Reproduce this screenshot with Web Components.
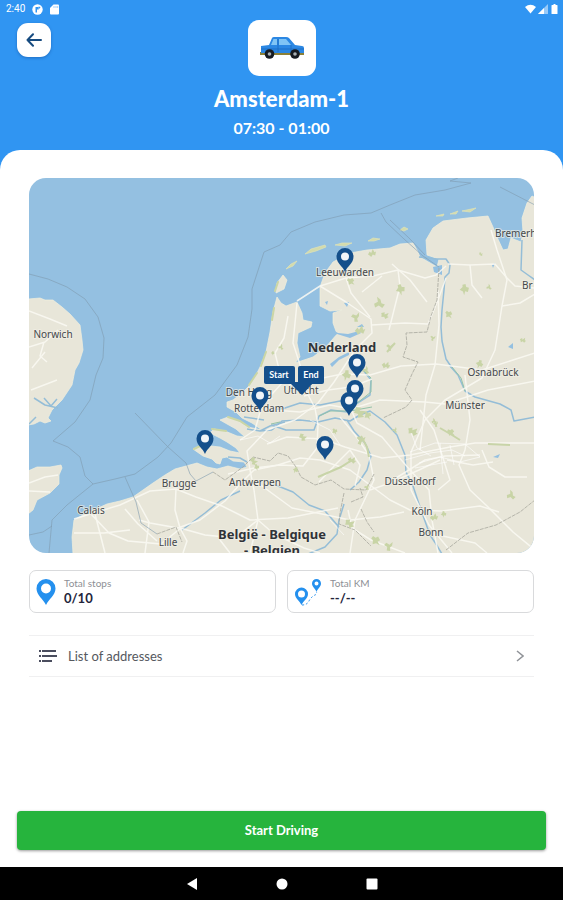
<!DOCTYPE html>
<html lang="en">
<head>
<meta charset="utf-8">
<meta name="viewport" content="width=device-width, initial-scale=1">
<title>Amsterdam-1</title>
<style>
  body {
    background-color: #3095f2;
    color: #2c2f3e;
    display: flex;
    flex-direction: column;
    font-family: Lato, "Liberation Sans", sans-serif;
    margin: 0;
    min-height: 100vh;
  }
</style>
</head>
<body>
<status-bar>2:40</status-bar>
<route-header>
  <span slot="name">Amsterdam-1</span>
  <span slot="time">07:30 - 01:00</span>
</route-header>
<route-sheet>
  <route-map></route-map>
  <stat-row>
    <stat-card icon="stops"><span slot="label">Total stops</span>0/10</stat-card>
    <stat-card icon="km"><span slot="label">Total KM</span>--/--</stat-card>
  </stat-row>
  <address-link>List of addresses</address-link>
  <drive-button slot="footer">Start Driving</drive-button>
</route-sheet>
<nav-bar></nav-bar>

<script>
// Attach an open shadow root with the given markup
function define (tagName, html, setup) {
  const template = document.createElement('template')
  template.innerHTML = html

  customElements.define(tagName, class extends HTMLElement {
    constructor () {
      super()
      this.attachShadow({ mode: 'open' }).appendChild(template.content.cloneNode(true))
    }

    connectedCallback () {
      if (setup) {
        setup(this, this.shadowRoot)
      }
    }
  })
}

define('status-bar', `
<style>
  :host {
    align-items: center;
    color: #fff;
    display: flex;
    font: 10px/18px Roboto, sans-serif;
    gap: 7px;
    height: 18px;
    padding: 0 4px 0 6px;
  }
  .right {
    display: flex;
    gap: 2px;
    margin-left: auto;
  }
  svg {
    display: block;
    fill: #fff;
  }
</style>
<slot></slot>
<svg width="11" height="11" viewBox="0 0 11 11"><circle cx="5.500" cy="5.500" r="5.200"/><path d="M3.500 8.500V3h3.200v2.500H5v3z" fill="#3095f2"/><path d="M6.500 2.500 8.500 3 7.500 5z" fill="#3095f2"/></svg>
<svg width="9" height="11" viewBox="0 0 9 11"><path d="M3.500 .500H8q1 0 1 1v8q0 1-1 1H1q-1 0-1-1V4z"/><path d="M4 2v2M6 2v2M7.700 2v2" stroke="#7dbbf7" stroke-width=".7"/></svg>
<div class="right">
  <svg width="11" height="10" viewBox="0 0 11 10"><path d="M0 3Q5.500-1.500 11 3L5.500 9.500z"/></svg>
  <svg width="10" height="10" viewBox="0 0 10 10"><path d="M0 10 10 0v10z" opacity=".5"/><path d="M0 10 6 4v6z"/></svg>
  <svg width="9" height="10" viewBox="0 0 9 10"><path d="M3.500 0h2v1H7q.5 0 .5.500v8q0 .5-.5.500H2q-.5 0-.5-.500v-8Q1.500 1 2 1h1.500z"/></svg>
</div>
`)

define('route-header', `
<style>
  :host {
    color: #fff;
    display: block;
    padding: 2px 17px 12px;
    text-align: center;
  }
  .top {
    align-items: start;
    display: grid;
    grid-template-columns: 1fr 68px 1fr;
  }
  button {
    background-color: #fff;
    border: none;
    border-radius: 11px;
    box-shadow: 0 1px 3px rgba(0, 40, 110, .35);
    cursor: pointer;
    display: grid;
    height: 34px;
    margin-top: 3px;
    padding: 0;
    place-items: center;
    width: 34px;
  }
  .vehicle {
    background-color: #fff;
    border-radius: 11px;
    display: grid;
    height: 56px;
    place-items: center;
  }
  h1 {
    font-size: 22px;
    font-weight: 900;
    line-height: 30px;
    margin: 8px 0 4px;
  }
  p {
    font-size: 16px;
    font-weight: 700;
    line-height: 20px;
    margin: 0;
  }
</style>
<div class="top">
  <button type="button" aria-label="Back">
    <svg width="16" height="14" viewBox="0 0 16 14" fill="none" stroke="#164b80" stroke-width="2" stroke-linecap="round" stroke-linejoin="round"><path d="M15 7H1.500M7 1.300 1.500 7 7 12.700"/></svg>
  </button>
  <div class="vehicle">
    <svg width="46" height="24" viewBox="0 0 46 24">
      <path d="M1 16h44v3H1z" fill="#8b8038"/>
      <path d="M2 10 10 9 13 2Q13.500 1 15 1h12q2 0 3 1l6 7 7 1q2 0 2 2v5H2z" fill="#2b87e3"/>
      <path d="M12 9 14.500 3H18v6zM20 3h7l5 6H20z" fill="#80c4f5"/>
      <path d="M19 3v13M32 9v7M2 13h43" stroke="#1b6bc0" stroke-width=".8"/>
      <circle cx="10.500" cy="18" r="4.800" fill="#161b22"/><circle cx="10.500" cy="18" r="1.800" fill="#a9b0b5"/>
      <circle cx="36" cy="18" r="4.800" fill="#161b22"/><circle cx="36" cy="18" r="1.800" fill="#a9b0b5"/>
    </svg>
  </div>
</div>
<h1><slot name="name"></slot></h1>
<p><slot name="time"></slot></p>
`)

define('route-sheet', `
<style>
  :host {
    background-color: #fff;
    border-radius: 20px 20px 0 0;
    display: flex;
    flex: 1;
    flex-direction: column;
    justify-content: space-between;
    padding: 28px 17px 17px;
  }
  .content {
    margin: 0 12px 24px;
  }
</style>
<div class="content"><slot></slot></div>
<slot name="footer"></slot>
`)

const pins = [[345, 272], [357, 378], [355, 404], [349, 416], [325, 460], [205, 454], [260, 411]]

// x, baseline, text, optional class
const places = [
  [53, 338, 'Norwich'], [345, 276, 'Leeuwarden'], [342, 352, 'Nederland', 'country'],
  [493, 376, 'Osnabrück'], [465, 409, 'Münster'], [249, 396, 'Den Haag'],
  [259, 412, 'Rotterdam'], [301, 394, 'Utrecht'], [179, 487, 'Brugge'],
  [255, 486, 'Antwerpen'], [91, 514, 'Calais'], [168, 546, 'Lille'],
  [410, 485, 'Düsseldorf'], [422, 515, 'Köln'], [431, 536, 'Bonn'],
  [495, 237, 'Bremerh', 'edge'], [522, 289, 'Br', 'edge'],
  [272, 539, 'België - Belgique', 'country'], [272, 555, '- Belgien', 'country']
]

// Woods and heath, drawn as small blobs
const woods = [
  [372, 253, 4], [401, 289, 5], [379, 303, 6], [385, 315, 4], [351, 281, 4], [356, 317, 5],
  [360, 330, 5], [465, 289, 5], [489, 287, 3], [481, 254, 2], [449, 314, 4], [390, 347, 4],
  [386, 365, 4], [347, 375, 5], [366, 370, 4], [303, 437, 4], [335, 431, 3], [361, 440, 5],
  [352, 460, 4], [296, 470, 3], [367, 487, 3], [254, 461, 4], [257, 467, 3], [434, 421, 3],
  [413, 431, 5], [451, 432, 4], [436, 424, 3], [434, 517, 4], [444, 514, 3], [511, 495, 5],
  [350, 523, 5], [376, 540, 5], [389, 546, 5], [537, 546, 5], [273, 353, 2], [281, 347, 3],
  [360, 412, 6], [368, 415, 4], [433, 338, 3], [523, 340, 3], [480, 364, 4], [395, 430, 3]
]

const woodShapes = [
  'M-5 2-3-2-1 0 1-5 3-1 5-2 4 3 1 2-1 5-3 3z',
  'M-4-3-1-2 1-4 4-1 2 1 5 4 1 3-2 5-3 1-5 0z',
  'M-2-5 1-3 2 0 5 1 3 4 0 2-3 4-4 1-1-1z'
]

function drawWood ([x, y, r], i) {
  return `<path transform="translate(${x} ${y}) rotate(${i * 47 % 90}) scale(${r / 5})" d="${woodShapes[i % 3]}"/>`
}

function drawPin ([x, y]) {
  return `<path transform="translate(${x} ${y})" d="M0 0C-2-6-8.500-8-8.500-15.500a8.500 8.500 0 0 1 17 0C8.500-8 2-6 0 0z"/><circle cx="${x}" cy="${y - 15.5}" r="4" fill="#f2f5f8"/>`
}

define('route-map', `
<style>
  :host {
    border-radius: 17px;
    display: block;
    overflow: hidden;
  }
  svg {
    display: block;
    height: auto;
    width: 100%;
  }
  .places text {
    fill: #44484c;
    font: 10px "Noto Sans", sans-serif;
    paint-order: stroke;
    stroke: #f1efe6;
    stroke-opacity: .7;
    stroke-width: 2px;
    text-anchor: middle;
  }
  .places .country {
    fill: #303338;
    font-size: 13px;
    font-weight: 700;
  }
  .places .edge {
    text-anchor: start;
  }
  .tags text {
    fill: #fff;
    font: 700 9px Lato, sans-serif;
    text-anchor: middle;
  }
</style>
<svg viewBox="29 178 505 375" role="img" aria-label="Map of the route">
  <path fill="#94c0e1" d="M29 178h506v375H29z"/>

  <g fill="#e8e6d9" stroke="#f2efdd" stroke-width=".7">
    <path d="M28 299 40 298 45 300 53 300 62 307 70 314 80 325 82 340 83 350 79 363 75 370 72 385 62 400 52 410 50 414 48 418 51 421 45 423 40 421 34 424 28 425z"/>
    <path d="M28 471 37 467 50 467 61 465 62 468 59 475 59 484 50 493 37 500 33 510 28 514z"/>
    <path d="M73 554 72 537 74 520 83 515 96 509 107 504 120 501 133 497 143 490 153 483 165 475 175 469 186 466 197 463 207 467 217 469 228 466 240 469 247 467 244 462 233 461 227 457 222 458 220 464 216 463 212 459 203 456 193 449 202 445 211 446 220 447 230 451 240 453 236 448 227 442 220 438 210 433 214 429 225 431 237 436 245 437 236 429 227 424 220 420 228 417 238 421 248 427 262 430 252 423 242 418 236 412 227 407 227 402 233 400 242 393 250 385 256 375 261 365 266 352 270 332 273 312 277 297 281 303 286 306 297 302 302 313 303 320 312 322 311 327 298 333 297 343 300 357 295 363 313 357 326 347 337 334 333 323 333 313 342 310 330 311 320 306 320 287 325 273 333 262 350 253 367 250 390 248 400 244 413 243 417 250 420 257 437 267 439 259 427 255 426 240 433 228 443 221 467 218 488 216 493 227 497 237 503 250 508 249 511 238 521 242 523 232 522 218 527 203 532 196 536 198V554z"/>
    <path d="M276 293 277 283 283 275 287 280 284 289z"/>
  </g>

  <g fill="#d3dbac" stroke="#dfe2b8" stroke-width=".7">
    <path d="M286 269 291 264 297 261 293 266zM305 254 311 249 325 245 326 247 316 251zM335 245 342 243 352 243 345 246zM368 241 373 238 380 239 374 241zM400 230 404 227 408 229 404 231zM436 216 444 214 443 216zM450 214 458 211 456 214zM462 211 476 208 470 212z"/>
  </g>
  <g fill="none" stroke="#cbd6a5" stroke-width="2" stroke-linecap="round">
    <path d="M275 291 278 282M272 320 274 308M261 366 266 352M249 385 257 373M228 417 240 421 249 427M212 429 226 431M194 449 202 445"/>
  </g>

  <g fill="#94c0e1">
    <path d="M303 333 313 335 325 343 337 334 350 338 361 333 359 331 348 334 338 333 331 329 329 319 318 321 313 327z"/>
    <path d="M330 364 339 357 349 352 349 355 339 360 332 367zM344 303 349 302 347 307zM325 302 328 301 327 305zM357 327 362 324 364 327zM492 265 495 263 493 268zM493 457 500 454 498 458zM508 347 513 343 513 349zM433 267 442 265 442 275 434 272z"/>
  </g>

  <g fill="none" stroke="#94bdd7" stroke-width="1.500" stroke-linejoin="round">
    <path d="M419 257 436 259 446 259 450 265 449 273 445 277 444 290 442 310 441 327 442 341 446 359 452 368"/>
    <path d="M522 240 521 270 528 275 535 280"/>
    <path d="M450 366 458 375 465 391 475 397 500 404 511 410 514 421 535 417"/>
    <path d="M272 430 282 421 300 420 318 422 335 418 350 421 360 415 370 411 385 422 397 435 405 455 406 472 413 486 421 510 430 535 436 544 442 554"/>
    <path d="M270 411 285 408 300 403 320 405 340 401 356 404 370 395 371 380 363 370"/>
    <path d="M271 425 286 430 314 430 319 416 331 410 347 412"/>
    <path d="M228 457 240 458 247 462M247 429 260 431 272 430M244 417 264 420M260 431 270 426 285 422"/>
    <path d="M347 420 354 431 365 443 371 456 367 470 359 482 350 490"/>
    <path d="M344 504 339 520 337 534 325 547 308 554"/>
    <path d="M273 484 293 492 309 505 325 511 339 527M240 491 221 500 205 513 182 530"/>
    <path d="M34 398 45 405 58 408M44 398 51 406 57 399M29 424 36 417"/>
  </g>

  <g fill="none" stroke="#94c3a8" stroke-width="1">
    <path d="M452 367 461 378 465 391M363 370 371 378 371 392 361 400 350 408M319 416 330 411 350 411 372 407M271 424 280 422"/>
  </g>

  <g fill="none" stroke="#fbfaf4" stroke-width="1.500" stroke-linejoin="round" opacity=".85">
    <path d="M297 301 320 286 346 302 371 319 372 333 355 350 334 382 318 403 295 420 267 430 247 451 250 470 254 490 258 520 250 553"/>
    <path d="M320 286 346 278 373 276 398 270 425 278 436 275 446 266"/>
    <path d="M448 264 470 265 495 264 507 278 515 286 535 288"/>
    <path d="M346 278 351 293 370 317M362 292 382 276M398 270 400 286 389 330M392 264 410 280 427 302M372 325 405 323 428 324 438 300 446 278"/>
    <path d="M491 230 497 250 507 280 502 306 495 350 482 378 445 400 425 420 411 452 411 490 429 525 452 553"/>
    <path d="M502 306 520 303 535 294M470 265 472 285 482 298M438 290 439 325 435 365 426 395 420 450"/>
    <path d="M288 316 284 338 275 353 278 365 283 382 262 405 255 430 240 440M297 303 293 343 303 374 306 391 315 408 318 425 317 448 303 466 280 465 254 468 228 474"/>
    <path d="M283 382 302 387 318 379 342 374 370 375 401 366 436 364 482 370 535 353M304 396 328 390 351 387 372 379"/>
    <path d="M273 410 300 412 330 405 351 409 380 400 425 402 445 404 488 390 535 381M267 444 287 437 322 439 345 447 382 458 410 455 450 447 475 443 535 443"/>
    <path d="M350 407 357 423 382 437 397 455 410 470 429 490 432 520 438 553M340 417 355 435 369 455 374 480 355 520 350 553"/>
    <path d="M254 470 278 465 300 458 320 460 350 470 390 500 410 510 442 511 480 506 499 512"/>
    <path d="M420 410 434 430 442 455 450 480 438 490M465 375 470 420 465 450 459 465 470 490 487 506 513 532 535 550"/>
    <path d="M482 450 489 467 505 477 527 477M447 460 473 465 493 462M370 490 390 483 419 470 440 460M396 478 425 460 445 456 480 455"/>
    <path d="M254 470 241 483 225 501 200 520 178 528 150 523 139 520M254 480 292 508 322 514 350 520 380 517 404 512M258 520 274 534 304 548 320 553"/>
    <path d="M74 519 90 514 120 505 150 491 176 489 196 497 222 506 250 520 288 518 338 508M176 489 175 510 180 528 187 541 183 553M180 528 205 535 235 538 258 520"/>
    <path d="M91 514 109 533 128 541 161 544 181 528M125 509 138 524 157 541M74 533 104 533 130 530M95 514 105 553M137 500 149 522 145 553M220 540 230 553"/>
    <path d="M29 347 45 342 58 330M44 342 40 356 47 362M32 368 45 352M29 483 45 477 58 475M29 491 50 492M31 390 57 380M29 311 50 319 67 326"/>
    <path d="M348 510 352 528 371 540 405 553M438 535 475 543 487 553M355 486 360 465 350 450 335 465 319 482"/>
  </g>

  <g fill="none" stroke="#fff" stroke-width="1" opacity=".6">
    <path d="M410 452 435 443 465 444 480 457 460 462 440 457 419 463M405 460 430 453 452 450 465 456M415 468 447 462M440 443 443 474M450 445 454 465M410 430 417 448 431 456M344 535 330 520M240 440 258 436 270 443 280 436M258 405 273 398M310 420 330 430 340 445"/>
  </g>

  <g fill="none" stroke="#7f9bae" stroke-width=".8" opacity=".75">
    <path d="M29 274 48 279 67 287 85 299 98 317 104 338 103 358 96 375 90 400 75 422 53 441 68 447 80 457 85 476 93 484 115 479 135 474 158 457 171 443 187 417 215 395 237 365 248 337 252 309 252 289 264 252 280 245 291 232 315 222 344 215 371 213 390 205 415 195 445 190 471 183"/>
    <path d="M93 484 67 505 52 520 49 553M29 535 43 532 52 526M135 413 168 447 186 463 190 474 196 481 213 472M125 477 136 502 141 523 157 534"/>
    <path d="M381 213 386 222 404 239 423 256 439 267M390 220 410 239 425 255M471 183 450 181 458 178M500 187 535 205"/>
  </g>
  <g fill="none" stroke="#a9a99f" stroke-width="1" stroke-dasharray="4 1" opacity=".8">
    <path d="M439 268 437 300 431 316 427 332 406 333 407 345 403 357 418 362 412 374 405 390 412 400 406 407 383 418"/>
    <path d="M213 472 225 480 243 467 253 457 270 461 278 453 288 456 296 467 301 477 315 485 331 480 344 489 366 490 374 474"/>
    <path d="M344 493 340 513 339 524 355 530 371 546M351 502 363 497 360 488M361 509 367 522 374 532M157 534 176 527 182 542M446 550 468 533 496 525 520 512 535 500"/>
  </g>

  <g id="woods" fill="#c8d4a6"></g>
  <g fill="none" stroke="#c8d4a8" stroke-width="2"><path d="M361 436 367 447 369 457M440 428 452 435 460 440M488 444 510 445M318 477 341 467 352 460M387 352 395 343"/></g>

  <g id="places" class="places"></g>
  <g fill="#144f8b">
    <g id="pins"></g>
    <path d="M289 382h25l-12 13z"/>
    <rect x="264" y="366" width="31" height="18" rx="2"/>
    <rect x="298" y="366" width="26" height="18" rx="2"/>
  </g>
  <g class="tags">
    <text x="279" y="378">Start</text>
    <text x="311" y="378">End</text>
  </g>
</svg>
`, (host, root) => {
  root.getElementById('woods').innerHTML = woods.map(drawWood).join('')
  root.getElementById('pins').innerHTML = pins.map(drawPin).join('')
  root.getElementById('places').innerHTML = places.map(([x, y, name, type]) => {
    return `<text x="${x}" y="${y}" class="${type || 'town'}">${name}</text>`
  }).join('')
})

define('stat-row', `
<style>
  :host {
    display: grid;
    gap: 11px;
    grid-template-columns: 1fr 1fr;
    margin: 17px 0 22px;
  }
</style>
<slot></slot>
`)

const statIcons = {
  stops: `<svg width="20" height="26" viewBox="0 0 20 26" fill="#2490ee"><path fill-rule="evenodd" d="M10 26C7 20 .5 16 .5 9.500a9.500 9.500 0 0 1 19 0C19.500 16 13 20 10 26zM10 4.500a5 5 0 1 0 0 10 5 5 0 0 0 0-10z"/></svg>`,
  km: `<svg width="28" height="28" viewBox="0 0 28 28" fill="#2490ee"><path fill-rule="evenodd" d="M7.500 27C5.500 22.500 1 20.500 1 16a6.500 6.500 0 0 1 13 0C14 20.500 9.500 22.500 7.500 27zM7.500 12.500a3.500 3.500 0 1 0 0 7 3.500 3.500 0 0 0 0-7z"/><path fill-rule="evenodd" d="M22.500 14C21.500 10.500 18 9 18 5.500a4.500 4.500 0 0 1 9 0C27 9 23.500 10.500 22.500 14zM22.500 3.500a2 2 0 1 0 0 4 2 2 0 0 0 0-4z"/><path d="M8 27q5 0 7-4t6-6q2-1 1.500-3" fill="none" stroke="#2490ee" stroke-dasharray="2 2"/></svg>`
}

define('stat-card', `
<style>
  :host {
    align-items: center;
    border: 1px solid #d9dadc;
    border-radius: 7px;
    box-sizing: border-box;
    display: flex;
    gap: 8px;
    height: 43px;
    padding: 0 6px;
  }
  svg {
    display: block;
  }
  .label {
    color: #8d9095;
    font-size: 10px;
    line-height: 14px;
  }
  .value {
    color: #23253b;
    font-size: 13px;
    font-weight: 700;
    line-height: 17px;
  }
</style>
<div class="icon"></div>
<div>
  <div class="label"><slot name="label"></slot></div>
  <div class="value"><slot></slot></div>
</div>
`, (host, root) => {
  root.querySelector('.icon').innerHTML = statIcons[host.getAttribute('icon')]
})

define('address-link', `
<style>
  :host {
    display: block;
  }
  a {
    align-items: center;
    border: 1px solid #f0f0f1;
    border-width: 1px 0;
    color: #55585e;
    display: flex;
    font-size: 13px;
    gap: 11px;
    line-height: 40px;
    padding: 0 10px;
    text-decoration: none;
  }
  .chevron {
    margin-left: auto;
  }
</style>
<a href="#addresses">
  <svg width="18" height="14" viewBox="0 0 18 14" fill="none" stroke="#4a4d5e" stroke-width="2"><path d="M0 2h2M3 2h14M0 7h2M3 7h15M0 12h2M3 12h10"/></svg>
  <span><slot></slot></span>
  <svg class="chevron" width="8" height="12" viewBox="0 0 8 12" fill="none" stroke="#909398" stroke-width="1.500"><path d="M1 1l6 5-6 5"/></svg>
</a>
`)

define('drive-button', `
<style>
  :host {
    display: block;
  }
  button {
    background-color: #26b43d;
    border: none;
    border-radius: 4px;
    box-shadow: 0 1px 3px rgba(0, 0, 0, .4);
    color: #fff;
    cursor: pointer;
    display: block;
    font: 700 13px/39px Lato, sans-serif;
    padding: 0;
    width: 100%;
  }
</style>
<button type="button"><slot></slot></button>
`)

define('nav-bar', `
<style>
  :host {
    align-items: center;
    background-color: #000;
    display: flex;
    gap: 74px;
    height: 33px;
    justify-content: center;
  }
  button {
    background: none;
    border: none;
    display: block;
    height: 16px;
    padding: 0;
    width: 16px;
  }
  svg {
    display: block;
    fill: #fff;
  }
</style>
<button type="button" aria-label="Back"><svg width="16" height="16" viewBox="0 0 16 16"><path d="M13 2v12L3 8z"/></svg></button>
<button type="button" aria-label="Home"><svg width="16" height="16" viewBox="0 0 16 16"><circle cx="8" cy="8" r="5.500"/></svg></button>
<button type="button" aria-label="Recent apps"><svg width="16" height="16" viewBox="0 0 16 16"><rect x="2.500" y="2.500" width="11" height="11" rx="1"/></svg></button>
`)
</script>
</body>
</html>
